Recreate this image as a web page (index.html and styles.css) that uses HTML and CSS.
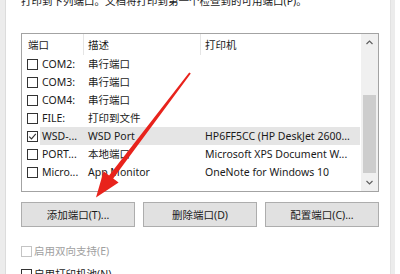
FILE: index.html
```html
<!DOCTYPE html>
<html lang="zh-CN">
<head>
  <meta charset="UTF-8">
  <title>打印机属性 | 端口</title>
  <link rel="stylesheet" href="styles.css">
</head>
<body>

  <div class="window">
    <div class="edge"></div>

    <div class="panel">
      <p class="intro">打印到下列端口。文档将打印到第一个检查到的可用端口(P)。</p>

      <div class="list">
        <div class="table">
          <div class="head">
            <span class="c1">端口</span>
            <span class="c2">描述</span>
            <span class="c3">打印机</span>
          </div>
          <div class="row">
            <span class="c1"><i class="box"></i><b>COM2:</b></span>
            <span class="c2">串行端口</span>
            <span class="c3"></span>
          </div>
          <div class="row">
            <span class="c1"><i class="box"></i><b>COM3:</b></span>
            <span class="c2">串行端口</span>
            <span class="c3"></span>
          </div>
          <div class="row">
            <span class="c1"><i class="box"></i><b>COM4:</b></span>
            <span class="c2">串行端口</span>
            <span class="c3"></span>
          </div>
          <div class="row">
            <span class="c1"><i class="box"></i><b>FILE:</b></span>
            <span class="c2">打印到文件</span>
            <span class="c3"></span>
          </div>
          <div class="row selected">
            <span class="c1"><i class="box checked">
              <svg width="9" height="9" viewBox="0 0 9 9"><path d="M1.2 4.6 L3.5 6.9 L7.8 1.8" fill="none" stroke="#333" stroke-width="1.1"/></svg>
            </i><b>WSD-...</b></span>
            <span class="c2">WSD Port</span>
            <span class="c3">HP6FF5CC (HP DeskJet 2600...</span>
          </div>
          <div class="row">
            <span class="c1"><i class="box"></i><b>PORT...</b></span>
            <span class="c2">本地端口</span>
            <span class="c3">Microsoft XPS Document W...</span>
          </div>
          <div class="row">
            <span class="c1"><i class="box"></i><b>Micro...</b></span>
            <span class="c2">App Monitor</span>
            <span class="c3">OneNote for Windows 10</span>
          </div>
        </div>

        <div class="scroll">
          <div class="step">
            <svg width="7" height="5" viewBox="0 0 7 5"><path d="M0.5 4 L3.5 1 L6.5 4" fill="none" stroke="#606060" stroke-width="1.2"/></svg>
          </div>
          <div class="track"><div class="thumb"></div></div>
          <div class="step">
            <svg width="7" height="5" viewBox="0 0 7 5"><path d="M0.5 1 L3.5 4 L6.5 1" fill="none" stroke="#606060" stroke-width="1.2"/></svg>
          </div>
        </div>
      </div>

      <div class="buttons">
        <button class="btn">添加端口(T)...</button>
        <button class="btn">删除端口(D)</button>
        <button class="btn">配置端口(C)...</button>
      </div>

      <label class="opt disabled"><i class="box"></i>启用双向支持(E)</label>
      <label class="opt"><i class="box"></i>启用打印机池(N)</label>
    </div>

    <div class="edge right"></div>
  </div>

  <!-- 红色箭头标注 -->
  <svg class="arrow" width="400" height="274" viewBox="0 0 400 274">
    <polygon points="189.2,72.4 190.8,73.6 113.2,178.6 118.6,182.6 96,197.5 103.6,171.2 109.1,175.6" fill="#e8231c"/>
  </svg>

</body>
</html>
```

FILE: styles.css
```css
:root {
  --text: #1a1a1a;
  --line: #a3a3a3;
  --sep: #e5e5e5;
  --edge: #ececec;
  --font: "Noto Sans", "Noto Sans CJK SC", sans-serif;
}
*, *::before, *::after { box-sizing: border-box; margin:0; padding:0; }
html, body { width:400px; height:274px; overflow:hidden; background:#fff; font:10.5px/14px var(--font); color:var(--text); }
body { position:relative; }

.window { display:flex; height:100%; }
.edge { width:6px; background:var(--edge); border-right:1px solid #dcdcdc; flex:none; }
.edge.right { width:5px; border-right:none; border-left:1px solid #e2e2e2; margin-right:6px; }

.panel { flex:1; padding:0 11px 0 15px; }
.intro { margin-top:-6px; margin-bottom:25px; white-space:nowrap; }

.list {
  display:flex;
  height:159px;
  border:1px solid var(--line);
}
.table { width:339px; flex:none; }
.head, .row { display:grid; grid-template-columns:62px 117px 1fr; }
.head { height:21px; }
.head span { display:flex; align-items:center; padding-left:4px; border-right:1px solid var(--sep); }
.head .c1 { padding-left:6px; }
.head .c3 { border-right:none; }

.row { height:18px; }
.row span { display:flex; align-items:center; white-space:nowrap; overflow:hidden; }
.row .c1 { padding-left:5px; }
.row .c1 b { font-weight:normal; flex:1; align-self:stretch; display:flex; align-items:center; margin-left:2px; padding-left:2px; }
.row .c2, .row .c3 { padding-left:4px; }
.row.selected .c1 b, .row.selected .c2, .row.selected .c3 { background:#e5e5e5; }
.row.selected .c3 { margin-right:1px; }

.box {
  display:inline-flex; align-items:center; justify-content:center;
  width:11px; height:11px; flex:none;
  border:1px solid #333; background:#fff;
}

.scroll { width:17px; flex:none; display:flex; flex-direction:column; background:#f0f0f0; }
.step { height:17px; display:flex; align-items:center; justify-content:center; flex:none; }
.track { flex:1; padding:44px 2px 0; }
.thumb { height:78px; background:#cdcdcd; }

.buttons { display:grid; grid-template-columns:repeat(3, 1fr); gap:8px; margin-top:10px; }
.btn {
  height:25px;
  font:10.5px/14px var(--font); color:var(--text);
  background:#e1e1e1;
  border:1px solid #adadad;
}

.opt { display:flex; align-items:center; gap:2px; height:16px; }
.opt:first-of-type { margin-top:16px; }
.opt + .opt { margin-top:7px; }
.opt.disabled { color:#a0a0a0; }
.opt.disabled .box { border-color:#c4c4c4; }

.arrow { position:absolute; top:0; left:0; pointer-events:none; }
```
